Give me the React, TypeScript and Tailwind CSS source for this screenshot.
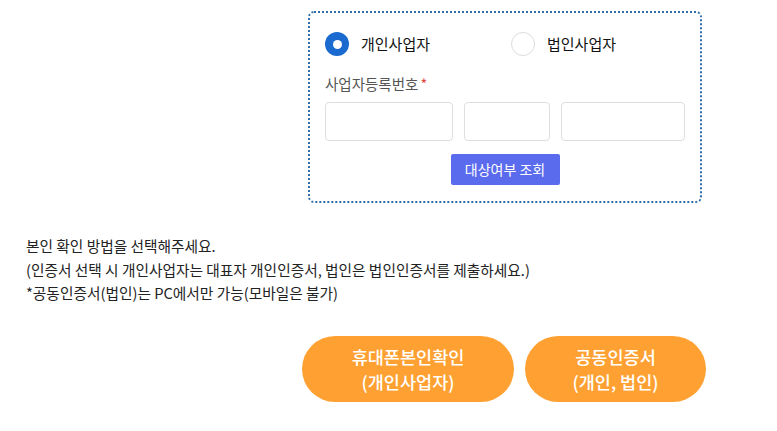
const font = "font-['Noto_Sans_CJK_KR','Noto_Sans',sans-serif]";

function Radio({ checked, label }: { checked?: boolean; label: string }) {
  return (
    <label className="flex items-center gap-[12px]">
      {checked ? (
        <span className="flex h-[24px] w-[24px] items-center justify-center rounded-full bg-[#1a6acf]">
          <span className="h-[9px] w-[9px] rounded-full bg-white" />
        </span>
      ) : (
        <span className="h-[24px] w-[24px] rounded-full border border-[#dcdcdc] bg-white" />
      )}
      <span className="text-[15px] text-[#111]">{label}</span>
    </label>
  );
}

export default function App() {
  return (
    <div className={`${font} h-[431px] w-[777px] overflow-hidden bg-white`}>
      <div className="ml-[308px] mt-[11px] h-[192px] w-[394px] rounded-[6px] border-2 border-dotted border-[#2f6ea6] px-[15px] pt-[19px]">
        <div className="flex items-center">
          <div className="w-[186px]">
            <Radio checked label="개인사업자" />
          </div>
          <Radio label="법인사업자" />
        </div>
        <div className="mt-[18px] text-[14.5px] leading-[20px] text-[#555]">
          사업자등록번호<span className="ml-[2px] text-[#e0463f]">*</span>
        </div>
        <div className="mt-[8px] flex gap-[11px]">
          <div className="h-[39px] w-[129px] rounded-[4px] border border-[#dedede]" />
          <div className="h-[39px] w-[86px] rounded-[4px] border border-[#dedede]" />
          <div className="h-[39px] w-[125px] rounded-[4px] border border-[#dedede]" />
        </div>
        <div className="mt-[13px] flex justify-center">
          <button className="h-[31px] w-[109px] rounded-[2px] bg-[#5b6bee] text-[14px] text-white">
            대상여부 조회
          </button>
        </div>
      </div>

      <div className="ml-[26px] mt-[31px] text-[14.7px] leading-[23.5px] text-[#222]">
        <p>본인 확인 방법을 선택해주세요.</p>
        <p>(인증서 선택 시 개인사업자는 대표자 개인인증서, 법인은 법인인증서를 제출하세요.)</p>
        <p>*공동인증서(법인)는 PC에서만 가능(모바일은 불가)</p>
      </div>

      <div className="ml-[302px] mt-[31px] flex gap-[11px]">
        <button className="h-[66px] w-[212px] rounded-full bg-[#ffa132] text-[17.5px] font-medium leading-[25px] text-white">
          휴대폰본인확인
          <br />
          (개인사업자)
        </button>
        <button className="h-[66px] w-[181px] rounded-full bg-[#ffa132] text-[17.5px] font-medium leading-[25px] text-white">
          공동인증서
          <br />
          (개인, 법인)
        </button>
      </div>
    </div>
  );
}
